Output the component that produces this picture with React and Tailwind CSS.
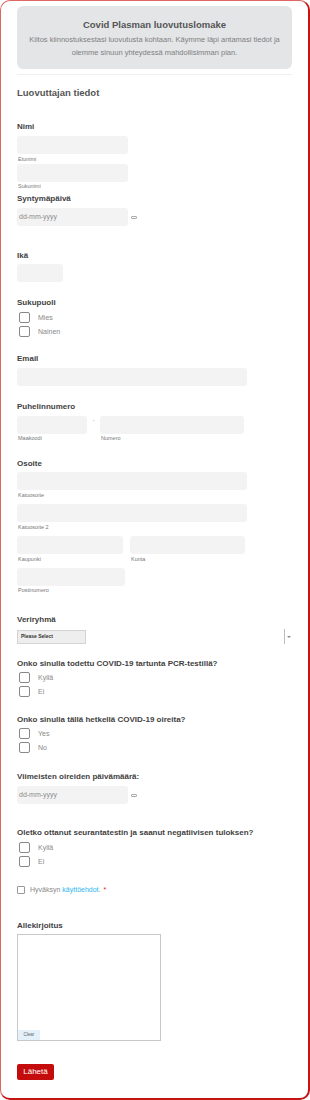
import React from "react";

const F = { fontFamily: '"Liberation Sans", Arial, sans-serif' };

function Label({ children, className = "" }) {
  return (
    <div className={"text-[8px] leading-[10px] font-bold text-[#3f3f3f] " + className}>{children}</div>
  );
}

function Input({ className = "" }) {
  return <div className={"h-[18px] rounded-[3px] bg-[#f3f3f3] " + className} />;
}

function Sub({ children, className = "" }) {
  return <div className={"text-[5.5px] leading-[8px] text-[#777] pl-[1px] " + className}>{children}</div>;
}

function Check({ label }) {
  return (
    <div className="flex items-start h-[14px] pl-[2px]">
      <div className="w-[11px] h-[11px] border border-[#888] rounded-[2px] bg-white" />
      <span className="ml-[8px] text-[7px] leading-[11px] text-[#888]">{label}</span>
    </div>
  );
}

function DateInput({ className = "" }) {
  return (
    <div className={"flex items-center " + className}>
      <div className="w-[111px] h-[18px] rounded-[3px] bg-[#f3f3f3] flex items-center pl-[2px] text-[7px] text-[#8a8a8a]">
        dd-mm-yyyy
      </div>
      <div className="ml-[3px] w-[6px] h-[3px] border border-[#aaa] rounded-[1px]" />
    </div>
  );
}

export default function App() {
  return (
    <div style={F} className="w-[310px] h-[1100px] bg-white">
      <div className="h-[1100px] border-l border-t border-[#e06666] border-r-2 border-b-2 border-r-[#c41414] border-b-[#c41414] rounded-[10px] pl-[16px] pr-[16px]">
        <div className="mt-[5px] h-[63px] rounded-[6px] bg-[#e3e5e7] flex flex-col items-center pt-[13px]">
          <div className="text-[9.5px] leading-[12px] font-bold text-[#555]">Covid Plasman luovutuslomake</div>
          <div className="mt-[2px] text-[7.5px] leading-[13px] text-[#808080] text-center px-[4px]">
            Kiitos kiinnostuksestasi luovutusta kohtaan. Käymme läpi antamasi tiedot ja olemme sinuun yhteydessä mahdollisimman pian.
          </div>
        </div>
        <div className="mt-[5px] h-[1px] bg-[#efefef]" />
        <div className="mt-[12px] text-[9.5px] leading-[12px] font-bold text-[#555]">Luovuttajan tiedot</div>

        <Label className="mt-[23px]">Nimi</Label>
        <Input className="mt-[4px] w-[111px]" />
        <Sub className="mt-[1px]">Etunimi</Sub>
        <Input className="mt-[1px] w-[111px]" />
        <Sub>Sukunimi</Sub>

        <Label className="mt-[4px]">Syntymäpäivä</Label>
        <DateInput className="mt-[4px]" />

        <Label className="mt-[25px]">Ikä</Label>
        <Input className="mt-[3px] w-[46px]" />

        <Label className="mt-[16px]">Sukupuoli</Label>
        <div className="mt-[4px]">
          <Check label="Mies" />
          <Check label="Nainen" />
        </div>

        <Label className="mt-[14px]">Email</Label>
        <Input className="mt-[4px] w-[230px]" />

        <Label className="mt-[16px]">Puhelinnumero</Label>
        <div className="mt-[4px] flex">
          <div>
            <Input className="w-[70px]" />
            <Sub>Maakoodi</Sub>
          </div>
          <div className="w-[13px] text-[6px] leading-[8px] text-[#999] text-center">-</div>
          <div>
            <Input className="w-[144px]" />
            <Sub>Numero</Sub>
          </div>
        </div>

        <Label className="mt-[17px]">Osoite</Label>
        <Input className="mt-[3px] w-[230px]" />
        <Sub className="mt-[1px]">Katuosoite</Sub>
        <Input className="mt-[5px] w-[230px]" />
        <Sub className="mt-[1px]">Katuosoite 2</Sub>
        <div className="mt-[5px] flex">
          <div>
            <Input className="w-[106px]" />
            <Sub className="mt-[1px]">Kaupunki</Sub>
          </div>
          <div className="ml-[7px]">
            <Input className="w-[115px]" />
            <Sub className="mt-[1px]">Kunta</Sub>
          </div>
        </div>
        <Input className="mt-[5px] w-[108px]" />
        <Sub>Postinumero</Sub>

        <Label className="mt-[21px]">Veriryhmä</Label>
        <div className="mt-[4px] flex items-center">
          <div className="w-[69px] h-[14px] bg-[#eee] border border-[#d4d4d4] flex items-center pl-[3px] text-[5px] font-bold text-[#333]">
            Please Select
          </div>
          <div className="ml-auto mr-[1px] flex items-center">
            <div className="w-[1px] h-[15px] bg-[#bbb]" />
            <div className="ml-[2px] w-0 h-0 border-l-[2px] border-r-[2px] border-t-[2px] border-l-transparent border-r-transparent border-t-[#888]" />
          </div>
        </div>

        <Label className="mt-[15px]">Onko sinulla todettu COVID-19 tartunta PCR-testillä?</Label>
        <div className="mt-[3px]">
          <Check label="Kyllä" />
          <Check label="Ei" />
        </div>

        <Label className="mt-[15px]">Onko sinulla tällä hetkellä COVID-19 oireita?</Label>
        <div className="mt-[3px]">
          <Check label="Yes" />
          <Check label="No" />
        </div>

        <Label className="mt-[16px]">Viimeisten oireiden päivämäärä:</Label>
        <DateInput className="mt-[4px]" />

        <Label className="mt-[24px]">Oletko ottanut seurantatestin ja saanut negatiivisen tuloksen?</Label>
        <div className="mt-[4px]">
          <Check label="Kyllä" />
          <Check label="Ei" />
        </div>

        <div className="mt-[15px] flex items-center h-[10px]">
          <div className="w-[8px] h-[8px] border border-[#999] rounded-[1px]" />
          <span className="ml-[5px] text-[7px] text-[#888]">Hyväksyn </span>
          <span className="ml-[2px] text-[7px] text-[#2cb5ee]">käyttöehdot</span>
          <span className="text-[7px] text-[#888]">.</span>
          <span className="ml-[3px] text-[7px] text-[#e02020]">*</span>
        </div>

        <Label className="mt-[26px]">Allekirjoitus</Label>
        <div className="mt-[3px] w-[144px] h-[107px] border border-[#c8c8c8] flex flex-col justify-end">
          <div className="w-[22px] h-[10px] bg-[#e4f0fa] text-[4.5px] leading-[10px] text-[#666] text-center">Clear</div>
        </div>

        <div className="mt-[23px] w-[37px] h-[16px] bg-[#c40c0c] rounded-[2px] flex items-center justify-center text-[8px] text-white">
          Lähetä
        </div>
      </div>
    </div>
  );
}
